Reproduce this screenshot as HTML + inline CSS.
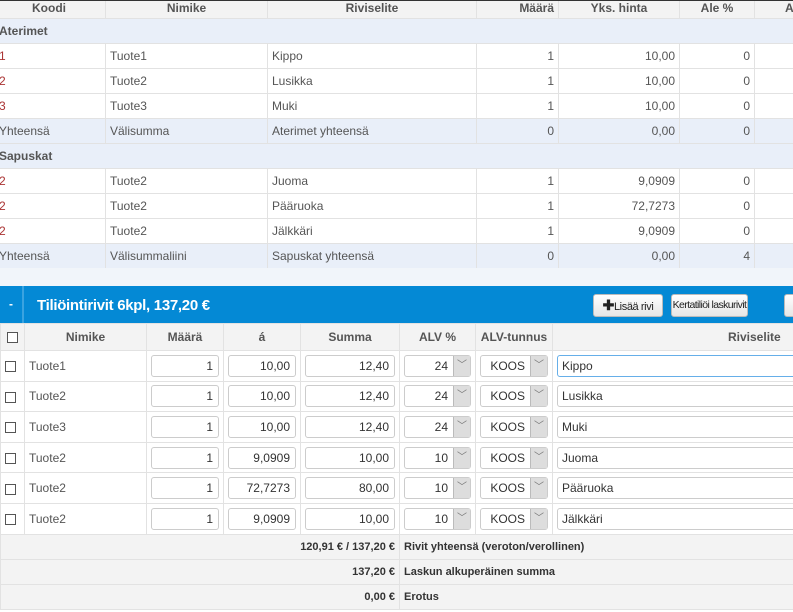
<!DOCTYPE html>
<html><head><meta charset="utf-8"><style>
*{box-sizing:border-box;margin:0;padding:0}
body{width:793px;height:612px;overflow:hidden;background:#fff;font-family:"Liberation Sans",Arial,sans-serif;font-size:12px;color:#555;position:relative}
table{border-collapse:collapse;table-layout:fixed;position:absolute}
td,th{border:1px solid #e2e2e2;white-space:nowrap;overflow:hidden;padding:0 4px}
th{background:#f3f3f3;font-weight:bold;color:#555;text-align:center}
.r{text-align:right}
.g td{background:#e9eff9}
.b{font-weight:bold}
#t1{left:-8px;top:0;width:900px}
#t1 td{height:25px}
#t1 th{height:18px;line-height:14px;vertical-align:top}
#t1 td:first-child{padding-left:6px}
.red{color:#a33}
#gap{position:absolute;left:0;top:268px;width:793px;height:18px;background:#f1f5fa}
#bar{position:absolute;left:0;top:286px;width:793px;height:37px;background:#0489d5;color:#fff}
#bar .m{position:absolute;left:0;top:0;width:24px;height:37px;border-right:2px solid #3aa3e0;text-align:center;line-height:37px;font-weight:bold}
#bar .t{position:absolute;left:37px;top:11px;font-size:15px;font-weight:bold;letter-spacing:-.3px}
.btn{position:absolute;top:8px;height:23px;background:linear-gradient(#fff,#e6e6e6);border:1px solid #bbb;border-radius:3px;color:#222;font-size:11px;letter-spacing:-.4px;line-height:21px;text-align:center;white-space:nowrap;overflow:hidden}
#t2{left:0;top:323px;width:1000px}
#t2 th{height:27px}
#t2 tr.d td{height:30.6px;padding-top:0;padding-bottom:0}
.cb{display:inline-block;width:11px;height:11px;border:1px solid #555;background:#fff;vertical-align:middle}
.in{height:22px;border:1px solid #ccc;border-radius:3px;background:#fff;line-height:20px;padding:0 5px;color:#333;text-align:right}
.sel{position:relative;height:22px;border:1px solid #ccc;border-radius:3px;background:#fff;line-height:20px;color:#333;text-align:right;padding-right:22px}
.sel i{position:absolute;right:0;top:0;width:17px;height:20px;background:#ddd;border-left:1px solid #bbb;font-style:normal;text-align:center;color:#777;font-size:10px}
.tx{text-align:left;padding-left:4px}
#t2 tr.sum td{height:25px;background:#f3f3f3;color:#333;font-weight:bold;font-size:11px}
</style></head><body>
<div style="position:absolute;left:0;top:0;width:793px;height:1px;background:#333;z-index:5"></div>
<table id="t1">
<colgroup><col style="width:113px"><col style="width:162px"><col style="width:209px"><col style="width:82px"><col style="width:121px"><col style="width:75px"><col style="width:138px"></colgroup>
<tr><th>Koodi</th><th>Nimike</th><th>Riviselite</th><th class="r">Määrä</th><th>Yks. hinta</th><th>Ale %</th><th style="text-align:left;padding-left:30px">ALV</th></tr>
<tr class="g"><td colspan="7" class="b">Aterimet</td></tr>
<tr><td class="red">1</td><td>Tuote1</td><td>Kippo</td><td class="r">1</td><td class="r">10,00</td><td class="r">0</td><td></td></tr>
<tr><td class="red">2</td><td>Tuote2</td><td>Lusikka</td><td class="r">1</td><td class="r">10,00</td><td class="r">0</td><td></td></tr>
<tr><td class="red">3</td><td>Tuote3</td><td>Muki</td><td class="r">1</td><td class="r">10,00</td><td class="r">0</td><td></td></tr>
<tr class="g"><td>Yhteensä</td><td>Välisumma</td><td>Aterimet yhteensä</td><td class="r">0</td><td class="r">0,00</td><td class="r">0</td><td></td></tr>
<tr class="g"><td colspan="7" class="b">Sapuskat</td></tr>
<tr><td class="red">2</td><td>Tuote2</td><td>Juoma</td><td class="r">1</td><td class="r">9,0909</td><td class="r">0</td><td></td></tr>
<tr><td class="red">2</td><td>Tuote2</td><td>Pääruoka</td><td class="r">1</td><td class="r">72,7273</td><td class="r">0</td><td></td></tr>
<tr><td class="red">2</td><td>Tuote2</td><td>Jälkkäri</td><td class="r">1</td><td class="r">9,0909</td><td class="r">0</td><td></td></tr>
<tr class="g"><td>Yhteensä</td><td>Välisummaliini</td><td>Sapuskat yhteensä</td><td class="r">0</td><td class="r">0,00</td><td class="r">4</td><td></td></tr>
</table>
<div id="gap"></div>
<div id="bar"><div class="m">-</div><div class="t">Tiliöintirivit 6kpl, 137,20 €</div>
<div class="btn" style="left:593px;width:70px"><b style="font-size:14px">✚</b>Lisää rivi</div>
<div class="btn" style="left:671px;width:77px;font-size:10.5px;letter-spacing:-.6px">Kertatiliöi laskurivit</div>
<div class="btn" style="left:784px;width:30px"></div></div>
<table id="t2">
<colgroup><col style="width:24px"><col style="width:122px"><col style="width:77px"><col style="width:77px"><col style="width:99px"><col style="width:76px"><col style="width:77px"><col style="width:448px"></colgroup>
<tr><th><span class="cb"></span></th><th>Nimike</th><th>Määrä</th><th>á</th><th>Summa</th><th>ALV %</th><th>ALV-tunnus</th><th style="text-align:left;padding-left:175px">Riviselite</th></tr>
<tr class="d"><td><span class="cb"></span></td><td>Tuote1</td><td><div class="in">1</div></td><td><div class="in">10,00</div></td><td><div class="in">12,40</div></td><td><div class="sel">24<i>﹀</i></div></td><td><div class="sel">KOOS<i>﹀</i></div></td><td><div class="in tx" style="border-color:#66afe9">Kippo</div></td></tr>
<tr class="d"><td><span class="cb"></span></td><td>Tuote2</td><td><div class="in">1</div></td><td><div class="in">10,00</div></td><td><div class="in">12,40</div></td><td><div class="sel">24<i>﹀</i></div></td><td><div class="sel">KOOS<i>﹀</i></div></td><td><div class="in tx">Lusikka</div></td></tr>
<tr class="d"><td><span class="cb"></span></td><td>Tuote3</td><td><div class="in">1</div></td><td><div class="in">10,00</div></td><td><div class="in">12,40</div></td><td><div class="sel">24<i>﹀</i></div></td><td><div class="sel">KOOS<i>﹀</i></div></td><td><div class="in tx">Muki</div></td></tr>
<tr class="d"><td><span class="cb"></span></td><td>Tuote2</td><td><div class="in">1</div></td><td><div class="in">9,0909</div></td><td><div class="in">10,00</div></td><td><div class="sel">10<i>﹀</i></div></td><td><div class="sel">KOOS<i>﹀</i></div></td><td><div class="in tx">Juoma</div></td></tr>
<tr class="d"><td><span class="cb"></span></td><td>Tuote2</td><td><div class="in">1</div></td><td><div class="in">72,7273</div></td><td><div class="in">80,00</div></td><td><div class="sel">10<i>﹀</i></div></td><td><div class="sel">KOOS<i>﹀</i></div></td><td><div class="in tx">Pääruoka</div></td></tr>
<tr class="d"><td><span class="cb"></span></td><td>Tuote2</td><td><div class="in">1</div></td><td><div class="in">9,0909</div></td><td><div class="in">10,00</div></td><td><div class="sel">10<i>﹀</i></div></td><td><div class="sel">KOOS<i>﹀</i></div></td><td><div class="in tx">Jälkkäri</div></td></tr>
<tr class="sum"><td colspan="5" class="r">120,91 € / 137,20 €</td><td colspan="3">Rivit yhteensä (veroton/verollinen)</td></tr>
<tr class="sum"><td colspan="5" class="r">137,20 €</td><td colspan="3">Laskun alkuperäinen summa</td></tr>
<tr class="sum"><td colspan="5" class="r">0,00 €</td><td colspan="3">Erotus</td></tr>
</table>
</body></html>
